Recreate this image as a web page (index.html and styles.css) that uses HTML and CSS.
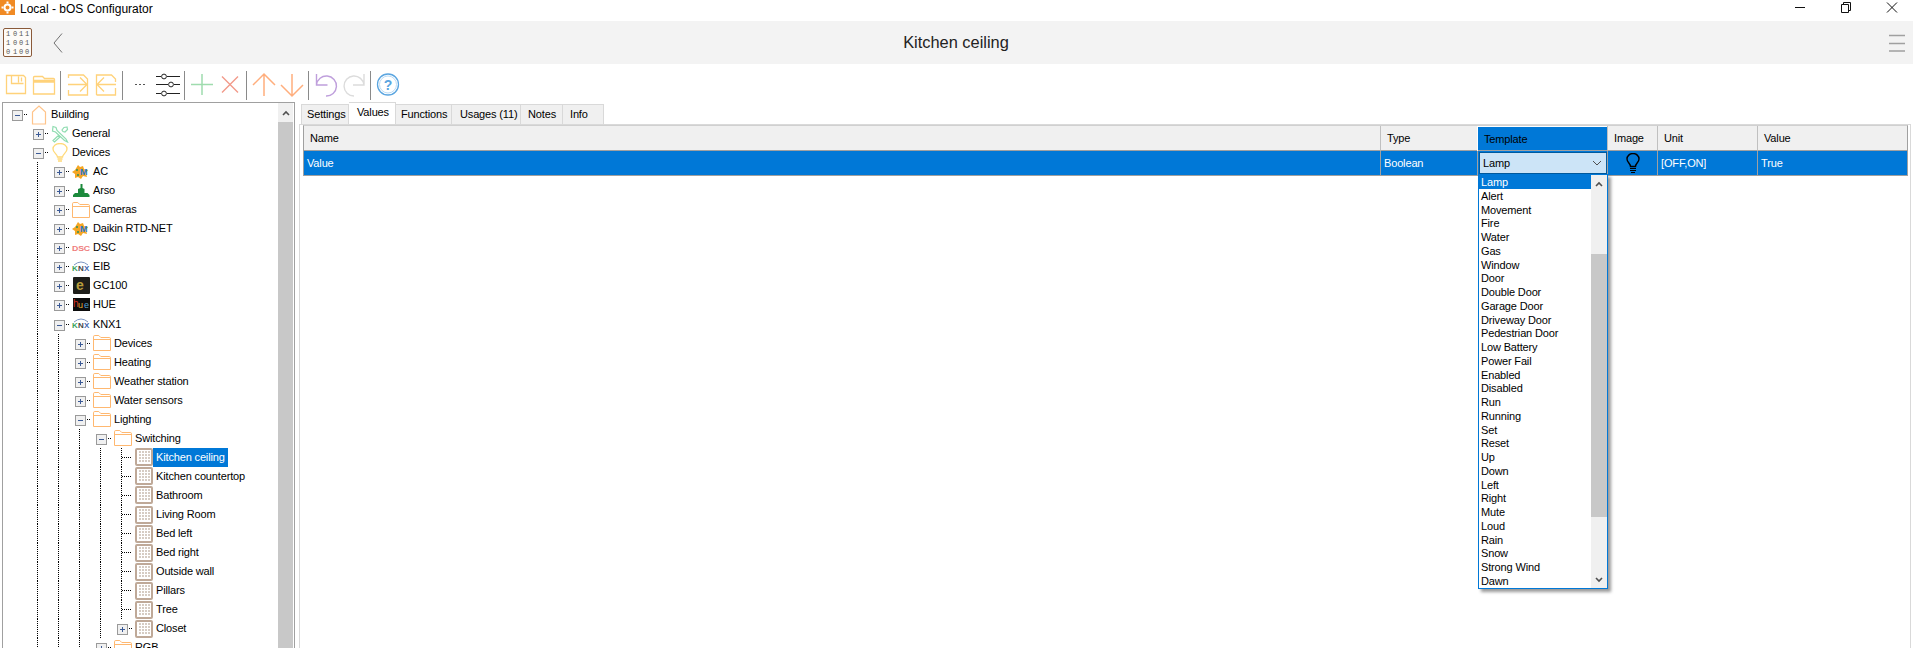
FILE: index.html
```html
<!DOCTYPE html>
<html lang="en">
<head>
<meta charset="utf-8">
<title>Local - bOS Configurator</title>
<link rel="stylesheet" href="styles.css">
</head>
<body>
<svg class="defs" width="0" height="0">
  <symbol id="folder" viewBox="0 0 18 16"><path d="M.5 15.500V1.800q0-1.300 1.300-1.300h4l2 2h8.400q1.300 0 1.300 1.300V15.500z M.5 4.500h17" fill="#fff" stroke="#ffb870"/></symbol>
  <symbol id="cell" viewBox="0 0 18 18"><rect x="1" y="1" width="16" height="16" rx="1" fill="#fff" stroke="#bfa998" stroke-width="2"/><path d="M5 3v12M8 3v12M11 3v12M14 3v12" stroke="#c9bcb0" stroke-width="1.500" stroke-dasharray="2 1"/></symbol>
  <symbol id="daikin" viewBox="0 0 18 16"><path d="M6 1l2 2 3-1 1 3 4 1-2 3 1 4-4-1-2 3-3-2-3 1V10L0 8l3-2z" fill="#f5a623"/><circle cx="5" cy="6" r="1" fill="#2d8f5a"/><circle cx="6" cy="11" r="1" fill="#2d8f5a"/><text x="8" y="11" class="logo-m">M</text></symbol>
  <symbol id="knx" viewBox="0 0 18 12"><path d="M2 4Q9-2 16 4" fill="none" stroke="#7d96c2"/><text x="0" y="10" class="logo-k">K</text><text x="6" y="10" class="logo-n">N</text><text x="12" y="10" class="logo-x">X</text></symbol>
</svg>

<div class="titlebar">
  <svg class="appicon" width="15" height="15" viewBox="0 0 15 15"><rect width="15" height="15" fill="#f08a24"/><circle cx="7.500" cy="7.500" r="3" fill="none" stroke="#fff" stroke-width="2"/><path d="M7.500 1.500v2M7.500 11.500v2M1.500 7.500h2M11.500 7.500h2" stroke="#fff" stroke-width="2"/></svg>
  <span class="apptitle">Local - bOS Configurator</span>
  <div class="winbtns">
    <svg width="46" height="16" viewBox="0 0 46 16"><path d="M18 7.500h10" stroke="#111"/></svg>
    <svg width="46" height="16" viewBox="0 0 46 16"><path d="M18.500 4.500h7v8h-7zM20.500 4.500v-2h7v8h-2" fill="none" stroke="#111"/></svg>
    <svg width="46" height="16" viewBox="0 0 46 16"><path d="M18 2.500l10 10M28 2.500l-10 10" stroke="#111"/></svg>
  </div>
</div>

<header class="header">
  <svg class="bits" width="29" height="30" viewBox="0 0 29 30"><rect x=".5" y=".5" width="28" height="28" rx="1.500" fill="#fdfbf8" stroke="#8a5a3a"/><text x="3" y="8" class="bit">1</text><text x="10" y="8" class="bit">0</text><text x="16" y="8" class="bit">1</text><text x="22" y="8" class="bit">1</text><text x="3" y="17" class="bit">1</text><text x="10" y="17" class="bit">0</text><text x="16" y="17" class="bit">0</text><text x="22" y="17" class="bit">1</text><text x="3" y="26" class="bit">0</text><text x="10" y="26" class="bit">1</text><text x="16" y="26" class="bit">0</text><text x="22" y="26" class="bit">0</text></svg>
  <svg class="backicon" width="10" height="20" viewBox="0 0 10 20"><path d="M9 .5L1 10l8 9.500" fill="none" stroke="#707070"/></svg>
  <h1 class="pagetitle">Kitchen ceiling</h1>
  <svg class="burger" width="16" height="18" viewBox="0 0 16 18"><path d="M0 1.500h16M0 9.500h16M0 17h16" stroke="#a0a0a0" stroke-width="1.500"/></svg>
</header>

<div class="toolbar">
  <div class="tgroup">
    <svg class="tool" viewBox="0 0 28 28"><path d="M4.500 5.500h17l2 2v16h-19z M9.500 5.500v8h12M16.500 6.500v6M19.500 7.500v4" fill="none" stroke="#ffd27a" stroke-width="1.300"/></svg>
    <svg class="tool" viewBox="0 0 28 28"><path d="M3.500 24V7.500q0-1 1-1h8l2 2h9q1 0 1 1V24zM3.500 12h21M3.500 10.500h21" fill="none" stroke="#ffd27a" stroke-width="1.300"/></svg>
  </div>
  <i class="tsep"></i>
  <div class="tgroup">
    <svg class="tool" viewBox="0 0 28 28"><path d="M4.500 8V5h15l4 4v16h-19v-5" fill="none" stroke="#ffd27a" stroke-width="1.300"/><path d="M4 14.500h19M16 7.500l7 7-7 7" fill="none" stroke="#ffd27a" stroke-width="1.300"/></svg>
    <svg class="tool" viewBox="0 0 28 28"><path d="M4.500 25V5h15l4 4v3M23.500 18v7h-19" fill="none" stroke="#ffd27a" stroke-width="1.300"/><path d="M24 14.500H5M12 7.500l-7 7 7 7" fill="none" stroke="#ffd27a" stroke-width="1.300"/></svg>
  </div>
  <i class="tsep"></i>
  <div class="tgroup">
    <svg class="tool" viewBox="0 0 28 28"><path d="M9 14.500h2M13 14.500h2M17 14.500h2" stroke="#555" stroke-width="1.200"/></svg>
    <svg class="tool" viewBox="0 0 28 28"><path d="M2 6.500h5M13 6.500h13M2 14.500h12M20 14.500h6M2 23.500h5M13 23.500h13" stroke="#222" stroke-width="1.200"/><circle cx="10" cy="6.500" r="2.400" fill="none" stroke="#222"/><circle cx="17" cy="14.500" r="2.400" fill="none" stroke="#222"/><circle cx="10" cy="23.500" r="2.400" fill="none" stroke="#222"/></svg>
  </div>
  <i class="tsep"></i>
  <div class="tgroup">
    <svg class="tool" viewBox="0 0 28 28"><path d="M14 4v21M3 14.500h22" stroke="#9fdcae" stroke-width="1.500"/></svg>
    <svg class="tool" viewBox="0 0 28 28"><path d="M6 6.500l16 16M22 6.500l-16 16" stroke="#f29a8a" stroke-width="1.400"/></svg>
  </div>
  <i class="tsep"></i>
  <div class="tgroup">
    <svg class="tool" viewBox="0 0 28 28"><path d="M14 26V4M3 15L14 4l11 11" fill="none" stroke="#ffae7d" stroke-width="1.500"/></svg>
    <svg class="tool" viewBox="0 0 28 28"><path d="M14 4v22M3 15l11 11 11-11" fill="none" stroke="#ffae7d" stroke-width="1.500"/></svg>
  </div>
  <i class="tsep"></i>
  <div class="tgroup">
    <svg class="tool" viewBox="0 0 28 28"><path d="M4.500 4v11h11M4.500 15A10 10 0 1 1 14 26" fill="none" stroke="#bf9fdc" stroke-width="1.400"/></svg>
    <svg class="tool" viewBox="0 0 28 28"><path d="M24 4v11H13M24 15A10 10 0 1 0 14 26" fill="none" stroke="#dcdcdc" stroke-width="1.400"/></svg>
  </div>
  <i class="tsep"></i>
  <div class="tgroup">
    <svg class="tool" viewBox="0 0 28 28"><circle cx="14" cy="14.500" r="10.500" fill="none" stroke="#5aa5e0" stroke-width="1.300"/><circle cx="14" cy="14.500" r="8.500" fill="none" stroke="#bcdcf5"/><text x="14" y="19.500" class="helpq">?</text></svg>
  </div>
</div>

<main class="main">
  <nav class="tree">
    <div class="rows">
      <div class="r"><b class="c x m"></b><span class="i"><svg width="16" height="20" viewBox="0 0 16 20"><path d="M1.500 19V7L8 1l6.500 6v12z" fill="#fff" stroke="#ffc48a" stroke-width="1.200"/></svg></span><span class="t">Building</span></div>
      <div class="r"><b class="c"></b><b class="c x p"></b><span class="i"><svg width="18" height="18" viewBox="0 0 18 18"><path d="M2 1.500l3 1 1 3 9 8.500 1.500 3-3-1.500-9-8.500-3-1zM16 2l-3 .5-2 2.500 1 1.500 2 .5 2.500-2.500zM8 10l-6 5.500 1.500 1.500 6-5.500" fill="#fff" stroke="#8fdcb0" stroke-width="1.200"/></svg></span><span class="t">General</span></div>
      <div class="r"><b class="c"></b><b class="c x m"></b><span class="i"><svg width="16" height="20" viewBox="0 0 16 20"><path d="M5.500 14c0-3-4.500-4-4.500-8a7 5.500 0 0 1 14 0c0 4-4.500 5-4.500 8zM5.500 16h5M6 18h4" fill="#fff" stroke="#ffd978" stroke-width="1.300"/></svg></span><span class="t">Devices</span></div>
      <div class="r"><b class="c"></b><b class="c v"></b><b class="c x p"></b><span class="i"><svg width="18" height="16"><use href="#daikin"/></svg></span><span class="t">AC</span></div>
      <div class="r"><b class="c"></b><b class="c v"></b><b class="c x p"></b><span class="i"><svg width="17" height="14" viewBox="0 0 17 14"><path d="M7.500 0h2v4l2 1v4h3l2 2v2H0v-2l2-2h3V5l2.500-1z" fill="#1c8a3c"/></svg></span><span class="t">Arso</span></div>
      <div class="r"><b class="c"></b><b class="c v"></b><b class="c x p"></b><span class="i"><svg width="18" height="16"><use href="#folder"/></svg></span><span class="t">Cameras</span></div>
      <div class="r"><b class="c"></b><b class="c v"></b><b class="c x p"></b><span class="i"><svg width="18" height="16"><use href="#daikin"/></svg></span><span class="t">Daikin RTD-NET</span></div>
      <div class="r"><b class="c"></b><b class="c v"></b><b class="c x p"></b><span class="i"><svg width="18" height="8" viewBox="0 0 18 8"><text x="0" y="7" textLength="18" lengthAdjust="spacingAndGlyphs" class="logo-dsc">DSC</text></svg></span><span class="t">DSC</span></div>
      <div class="r"><b class="c"></b><b class="c v"></b><b class="c x p"></b><span class="i"><svg width="18" height="12"><use href="#knx"/></svg></span><span class="t">EIB</span></div>
      <div class="r"><b class="c"></b><b class="c v"></b><b class="c x p"></b><span class="i"><svg width="17" height="17" viewBox="0 0 17 17"><rect width="17" height="17" rx="1" fill="#1e1e1a"/><text x="3" y="13" class="logo-gc">e</text></svg></span><span class="t">GC100</span></div>
      <div class="r"><b class="c"></b><b class="c v"></b><b class="c x p"></b><span class="i"><svg width="17" height="13" viewBox="0 0 17 13"><rect width="17" height="13" fill="#0c0c0c"/><text x="0" y="9" class="logo-h">h</text><text x="5" y="10" class="logo-u">u</text><text x="11" y="10" class="logo-e">e</text></svg></span><span class="t">HUE</span></div>
      <div class="r"><b class="c"></b><b class="c v"></b><b class="c x m"></b><span class="i"><svg width="18" height="12"><use href="#knx"/></svg></span><span class="t">KNX1</span></div>
      <div class="r"><b class="c"></b><b class="c v"></b><b class="c v"></b><b class="c x p"></b><span class="i"><svg width="18" height="16"><use href="#folder"/></svg></span><span class="t">Devices</span></div>
      <div class="r"><b class="c"></b><b class="c v"></b><b class="c v"></b><b class="c x p"></b><span class="i"><svg width="18" height="16"><use href="#folder"/></svg></span><span class="t">Heating</span></div>
      <div class="r"><b class="c"></b><b class="c v"></b><b class="c v"></b><b class="c x p"></b><span class="i"><svg width="18" height="16"><use href="#folder"/></svg></span><span class="t">Weather station</span></div>
      <div class="r"><b class="c"></b><b class="c v"></b><b class="c v"></b><b class="c x p"></b><span class="i"><svg width="18" height="16"><use href="#folder"/></svg></span><span class="t">Water sensors</span></div>
      <div class="r"><b class="c"></b><b class="c v"></b><b class="c v"></b><b class="c x m"></b><span class="i"><svg width="18" height="16"><use href="#folder"/></svg></span><span class="t">Lighting</span></div>
      <div class="r"><b class="c"></b><b class="c v"></b><b class="c v"></b><b class="c v"></b><b class="c x m"></b><span class="i"><svg width="18" height="16"><use href="#folder"/></svg></span><span class="t">Switching</span></div>
      <div class="r"><b class="c"></b><b class="c v"></b><b class="c v"></b><b class="c v"></b><b class="c v"></b><b class="c e"></b><span class="i"><svg width="18" height="18"><use href="#cell"/></svg></span><span class="t sel">Kitchen ceiling</span></div>
      <div class="r"><b class="c"></b><b class="c v"></b><b class="c v"></b><b class="c v"></b><b class="c v"></b><b class="c e"></b><span class="i"><svg width="18" height="18"><use href="#cell"/></svg></span><span class="t">Kitchen countertop</span></div>
      <div class="r"><b class="c"></b><b class="c v"></b><b class="c v"></b><b class="c v"></b><b class="c v"></b><b class="c e"></b><span class="i"><svg width="18" height="18"><use href="#cell"/></svg></span><span class="t">Bathroom</span></div>
      <div class="r"><b class="c"></b><b class="c v"></b><b class="c v"></b><b class="c v"></b><b class="c v"></b><b class="c e"></b><span class="i"><svg width="18" height="18"><use href="#cell"/></svg></span><span class="t">Living Room</span></div>
      <div class="r"><b class="c"></b><b class="c v"></b><b class="c v"></b><b class="c v"></b><b class="c v"></b><b class="c e"></b><span class="i"><svg width="18" height="18"><use href="#cell"/></svg></span><span class="t">Bed left</span></div>
      <div class="r"><b class="c"></b><b class="c v"></b><b class="c v"></b><b class="c v"></b><b class="c v"></b><b class="c e"></b><span class="i"><svg width="18" height="18"><use href="#cell"/></svg></span><span class="t">Bed right</span></div>
      <div class="r"><b class="c"></b><b class="c v"></b><b class="c v"></b><b class="c v"></b><b class="c v"></b><b class="c e"></b><span class="i"><svg width="18" height="18"><use href="#cell"/></svg></span><span class="t">Outside wall</span></div>
      <div class="r"><b class="c"></b><b class="c v"></b><b class="c v"></b><b class="c v"></b><b class="c v"></b><b class="c e"></b><span class="i"><svg width="18" height="18"><use href="#cell"/></svg></span><span class="t">Pillars</span></div>
      <div class="r"><b class="c"></b><b class="c v"></b><b class="c v"></b><b class="c v"></b><b class="c v"></b><b class="c e"></b><span class="i"><svg width="18" height="18"><use href="#cell"/></svg></span><span class="t">Tree</span></div>
      <div class="r"><b class="c"></b><b class="c v"></b><b class="c v"></b><b class="c v"></b><b class="c v"></b><b class="c x p"></b><span class="i"><svg width="18" height="18"><use href="#cell"/></svg></span><span class="t">Closet</span></div>
      <div class="r"><b class="c"></b><b class="c v"></b><b class="c v"></b><b class="c v"></b><b class="c x p"></b><span class="i"><svg width="18" height="16"><use href="#folder"/></svg></span><span class="t">RGB</span></div>
    </div>
    <div class="vscroll">
      <div class="vbtn"><svg width="8" height="6" viewBox="0 0 8 6"><path d="M1 5l3-3 3 3" fill="none" stroke="#505050" stroke-width="1.600"/></svg></div>
      <div class="vthumb"></div>
    </div>
  </nav>

  <section class="pane">
    <div class="tabs">
      <span class="tab">Settings</span>
      <span class="tab on">Values</span>
      <span class="tab">Functions</span>
      <span class="tab">Usages (11)</span>
      <span class="tab">Notes</span>
      <span class="tab">Info</span>
    </div>
    <div class="tabbody">
      <div class="grid">
        <div class="hd hname">Name</div>
        <div class="hd">Type</div>
        <div class="hd hsel">Template</div>
        <div class="hd">Image</div>
        <div class="hd">Unit</div>
        <div class="hd">Value</div>

        <div class="td tname">Value</div>
        <div class="td">Boolean</div>
        <div class="td tcombo">
          <div class="combo"><span>Lamp</span><svg width="10" height="6" viewBox="0 0 10 6"><path d="M1 1l4 4 4-4" fill="none" stroke="#505050"/></svg></div>
          <div class="drop">
            <ul class="list">
              <li class="cur">Lamp</li><li>Alert</li><li>Movement</li><li>Fire</li><li>Water</li><li>Gas</li><li>Window</li><li>Door</li><li>Double Door</li><li>Garage Door</li><li>Driveway Door</li><li>Pedestrian Door</li><li>Low Battery</li><li>Power Fail</li><li>Enabled</li><li>Disabled</li><li>Run</li><li>Running</li><li>Set</li><li>Reset</li><li>Up</li><li>Down</li><li>Left</li><li>Right</li><li>Mute</li><li>Loud</li><li>Rain</li><li>Snow</li><li>Strong Wind</li><li>Dawn</li>
            </ul>
            <div class="dscroll">
              <div class="dbtn"><svg width="8" height="6" viewBox="0 0 8 6"><path d="M1 5l3-3 3 3" fill="none" stroke="#505050" stroke-width="1.600"/></svg></div>
              <div class="dgap"></div>
              <div class="dthumb"></div>
              <div class="dspace"></div>
              <div class="dbtn"><svg width="8" height="6" viewBox="0 0 8 6"><path d="M1 1l3 3 3-3" fill="none" stroke="#505050" stroke-width="1.600"/></svg></div>
            </div>
          </div>
        </div>
        <div class="td timg"><svg width="14" height="20" viewBox="0 0 14 20"><path d="M4.500 13.500c0-3-3.500-4-3.500-7.500a6 5.500 0 0 1 12 0c0 3.500-3.500 4.500-3.500 7.500z" fill="none" stroke="#000" stroke-width="1.400"/><path d="M4 15.500h6M4 17.500h6M5 19.500h4" stroke="#000"/></svg></div>
        <div class="td">[OFF,ON]</div>
        <div class="td">True</div>
      </div>
    </div>
  </section>
</main>
</body>
</html>
```
FILE: styles.css
```css
* { box-sizing: border-box; }
html, body { margin: 0; height: 648px; overflow: hidden; background: #fff; }
body { font: 11px/1 "Liberation Sans", Arial, sans-serif; letter-spacing: -.15px; color: #000; display: flex; flex-direction: column; }
.defs { display: none; }

.titlebar { height: 21px; flex: none; display: flex; align-items: flex-start; background: #fff; overflow: hidden; }
.appicon { display: block; }
.apptitle { margin: 2px 0 0 5px; font-size: 12px; letter-spacing: 0; line-height: 14px; }
.winbtns { margin-left: auto; display: flex; margin-right: -2px; }
.winbtns svg { display: block; }

.header { height: 43px; flex: none; background: #f3f3f3; display: flex; align-items: center; padding-left: 3px; }
.bits { margin-top: 1px; display: block; }
.bit { font: 7px "Liberation Mono", monospace; letter-spacing: 0; fill: #555; }
.backicon { margin-left: 21px; }
.pagetitle { flex: 1; margin: 0; text-align: center; font-size: 16.400px; letter-spacing: 0; font-weight: 400; padding-right: 40px; color: #222; }
.burger { margin-right: 8px; }

.toolbar { height: 36px; flex: none; display: flex; align-items: flex-start; padding: 6px 0 0 2px; }
.tgroup { display: flex; margin-right: 2px; }
.tool { width: 28px; height: 28px; display: block; }
.tsep { display: block; width: 1px; height: 29px; margin: 1px 3px 0 0; background: #8a8a8a; }

.main { flex: 1; min-height: 0; display: flex; }

.tree { width: 293px; margin: 2px 0 0 2px; border: 1px solid #a0a0a0; border-bottom: 0; display: flex; background: #fff; overflow: hidden; }
.rows { flex: 1; min-width: 0; padding: 2px 0 0 3px; overflow: hidden; height: 545px; }
.r { height: 19.050px; display: flex; align-items: center; white-space: nowrap; }
.c { flex: none; display: block; width: 21px; height: 19px; background-repeat: no-repeat; }
.v { background-image: repeating-linear-gradient(#000 0 1px, transparent 1px 2px); background-size: 1px 100%; background-position: 10px 0; }
.e { background-image: repeating-linear-gradient(#000 0 1px, transparent 1px 2px), repeating-linear-gradient(90deg, #000 0 1px, transparent 1px 2px); background-size: 1px 100%, 10px 1px; background-position: 10px 0, 11px 9px; }
.x { background-image: repeating-linear-gradient(90deg, #000 0 1px, transparent 1px 2px); background-size: 5px 1px; background-position: 16px 9px; }
.x::before { content: ""; display: block; width: 9px; height: 9px; margin: 5px 0 0 6px; border: 1px solid #9a9a9a; background-color: #f0f0f0; background-repeat: no-repeat; background-image: linear-gradient(#3b5a96, #3b5a96); background-size: 5px 1px; background-position: center; }
.p::before { background-image: linear-gradient(#3b5a96, #3b5a96), linear-gradient(#3b5a96, #3b5a96); background-size: 5px 1px, 1px 5px; }
.i { flex: none; width: 24px; height: 19px; display: flex; align-items: center; justify-content: center; background: #fff; }
.i svg { display: block; }
.t { height: 19px; line-height: 19px; padding: 0 3px; margin-left: -3px; color: #000; }
.sel { background: #0078d7; color: #fff; }

.logo-m { font: bold 9px "Liberation Sans", sans-serif; fill: #2a7bd0; }
.logo-k { font: bold 8px "Liberation Sans", sans-serif; fill: #3aa35a; }
.logo-n { font: bold 8px "Liberation Sans", sans-serif; fill: #444; }
.logo-x { font: bold 8px "Liberation Sans", sans-serif; fill: #3f67b0; }
.logo-dsc { font: bold 8px "Liberation Sans", sans-serif; fill: #ef7d7d; }
.logo-gc { font: bold 14px "Liberation Sans", sans-serif; fill: #b89d3c; }
.logo-h { font: 10px "Liberation Sans", sans-serif; fill: #d03020; }
.logo-u { font: 9px "Liberation Sans", sans-serif; fill: #e0b030; }
.logo-e { font: 9px "Liberation Sans", sans-serif; fill: #50a0d0; }
.helpq { font: bold 14px "Liberation Sans", sans-serif; fill: #5aa5e0; text-anchor: middle; }

.vscroll { flex: none; width: 15px; margin-right: 1px; display: flex; flex-direction: column; background: #f0f0f0; }
.vbtn { height: 19px; display: flex; align-items: center; justify-content: center; background: #f0f0f0; }
.vthumb { flex: 1; background: #c8c8c8; }

.pane { flex: 1; min-width: 0; margin-left: 4px; display: flex; flex-direction: column; }
.tabs { height: 24px; flex: none; display: flex; align-items: flex-end; padding-left: 2px; }
.tab { height: 20px; line-height: 19px; padding: 0 0 0 5px; border: 1px solid #d9d9d9; border-bottom: 0; border-left-width: 0; background: #f0f0f0; white-space: nowrap; }
.tab:first-child { border-left-width: 1px; width: 48px; }
.tab:nth-child(2) { width: 47px; padding-left: 8px; }
.tab:nth-child(3) { width: 56px; }
.tab:nth-child(4) { width: 69px; padding-left: 8px; }
.tab:nth-child(5) { width: 42px; padding-left: 7px; }
.tab:nth-child(6) { width: 41px; padding-left: 7px; }
.tabs .on { height: 23px; line-height: 19px; background: #fff; margin-bottom: -1px; padding-bottom: 3px; }
.tabbody { flex: 1; min-height: 0; margin-right: 2px; border: 1px solid #d9d9d9; border-bottom: 0; padding: 0 3px; background: #fff; }

.grid { display: grid; grid-template-columns: 1076px 97px 130px 50px 100px 150px; grid-template-rows: 25px 25px; border: 1px solid #a0a0a0; border-top-color: #d0d0d0; border-bottom: 0; width: 1605px; }
.hd { background: #f0f0f0; border-left: 1px solid #c0c0c0; border-bottom: 1px solid #a0a0a0; padding: 0 6px; line-height: 25px; }
.hname { border-left: 0; }
.hd.hsel { background: #0078d7; border-left: 0; margin: 1px 0 0 1px; line-height: 24px; }
.td { background: #0078d7; color: #fff; border-left: 1px solid #a0a0a0; border-bottom: 1px solid #a0a0a0; padding: 0 3px; line-height: 24px; }
.tname { border-left: 0; }
.tcombo { position: relative; padding: 0; border-left: 1px solid #a0a0a0; }
.combo { height: 22px; margin: 1px 0 0 1px; background: #cce4f7; border: 1px solid #005a9e; color: #000; display: flex; align-items: center; justify-content: space-between; padding: 0 4px 0 3px; line-height: 20px; }
.timg { display: flex; align-items: center; justify-content: center; padding: 0; }

.drop { position: absolute; z-index: 5; left: 0; top: 23px; width: 130px; height: 415px; background: #fff; border: 1px solid #0078d7; display: flex; box-shadow: 3px 3px 3px rgba(0,0,0,.4); color: #000; }
.list { list-style: none; margin: 0; padding: 0; flex: 1; min-width: 0; overflow: hidden; }
.list li { height: 13.750px; line-height: 14px; padding-left: 2px; white-space: nowrap; }
.cur { background: #0078d7; color: #fff; }
.dscroll { flex: none; width: 16px; display: flex; flex-direction: column; background: #f0f0f0; }
.dbtn { height: 17px; flex: none; display: flex; align-items: center; justify-content: center; }
.dgap { height: 62px; flex: none; }
.dthumb { height: 263px; flex: none; background: #c8c8c8; }
.dspace { flex: 1; }
```
